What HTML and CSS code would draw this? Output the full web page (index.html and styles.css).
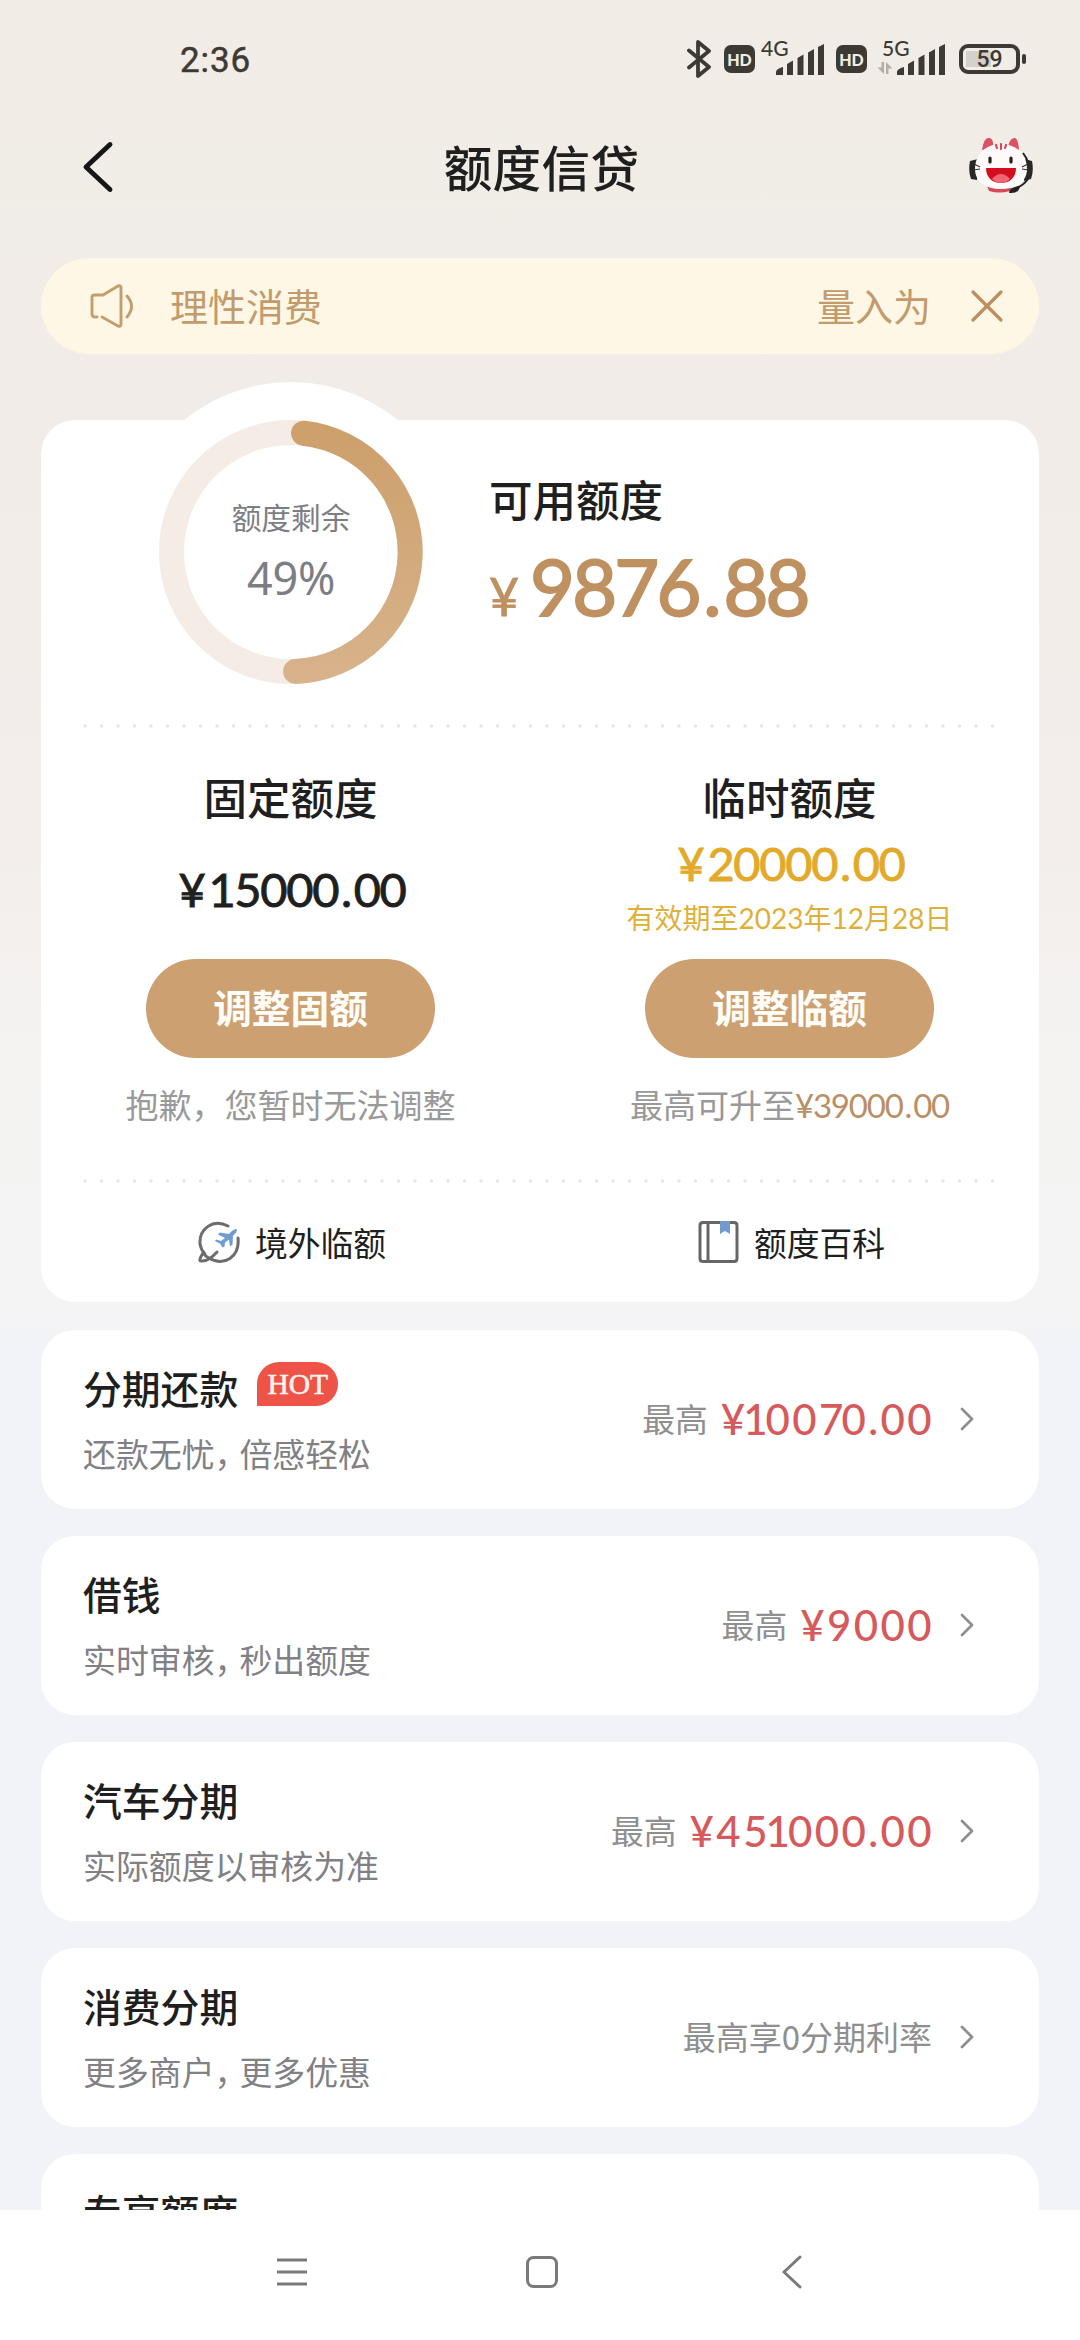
FILE: index.html
```html
<!DOCTYPE html>
<html lang="zh-CN">
<head>
<meta charset="utf-8">
<title>额度信贷</title>
<link rel="stylesheet" href="styles.css">
</head>
<body>
<div class="screen">
  <div class="status-bar">
    <span class="clock">2:36</span>
    <div class="status-icons">
      <svg class="bt" width="24" height="38" viewBox="0 0 24 38"><path d="M2 10.500 22 27 11 36V2L22 11 2 27.500" fill="none" stroke="#3d3935" stroke-width="3.800" stroke-linejoin="round" stroke-linecap="round"/></svg>
      <span class="hd hd-first">HD</span>
      <div class="signal">
        <span class="net">4G</span>
        <svg class="bars" width="48" height="31" viewBox="0 0 48 31"><path d="M0 31v-3q0-3 7-5v8zM11 31V20l6-3.500V31zM21.500 31V14l6-3.500V31zM32 31V8.500L38 5v26zM42 31V3l6-3v31z" fill="#3d3935"/></svg>
      </div>
      <span class="hd hd-second">HD</span>
      <div class="signal signal-data">
        <span class="net">5G</span>
        <svg class="bars" width="68" height="31" viewBox="-20 0 68 31"><path d="M-13 18v12l-6.500-6.500h4V18zM-11 30V18l6.500 6.500h-4V30z" fill="#b3aea8"/><path d="M0 31v-3q0-3 7-5v8zM11 31V20l6-3.500V31zM21.500 31V14l6-3.500V31zM32 31V8.500L38 5v26zM42 31V3l6-3v31z" fill="#3d3935"/></svg>
      </div>
      <div class="battery"><span class="battery-body">59</span><span class="battery-tip"></span></div>
    </div>
  </div>

  <header class="header">
    <svg class="back" width="32" height="52" viewBox="0 0 32 52"><path d="M28 3.500 4 26l24 22.500" fill="none" stroke="#161616" stroke-width="4.900" stroke-linecap="round" stroke-linejoin="round"/></svg>
    <h1 class="title">额度信贷</h1>
    <svg class="mascot" width="64" height="58" viewBox="0 0 64 58">
      <path d="M18 49q14 5 25 0l-2 5q-11 3-21 0z" fill="#d4485a"/>
      <path d="M13 13Q15 0 20 1q5 0 4 10zM39 11q1-9 6-10 4-1 5 12z" fill="#df5063"/>
      <path d="M9 22 1 24q-2 10 1 18l6 1zM55 22l8 2q2 10-1 18l-7 2z" fill="#292727"/>
      <path d="M32 7c16 0 26 11 26 25 0 13-11 20-26 20S6 45 6 32C6 18 16 7 32 7z" fill="#fffafa"/>
      <path d="M27 8l1 3M32 7v5M37 8l-1 3" stroke="#d4485a" stroke-width="2.200" stroke-linecap="round"/>
      <path d="M21 21v4M42 21v4" stroke="#222" stroke-width="3.200" stroke-linecap="round"/>
      <path d="M17 31h30c0 9-6 15-15 15s-15-6-15-15z" fill="#d50e1e"/>
      <path d="M23 42q9-10 18 0-4 4-9 4t-9-4z" fill="#f06675"/>
      <path d="M5 27l6 3M4 33l7-1M59 27l-6 3M60 33l-7-1" stroke="#333" stroke-width="1.200"/>
      <path d="M54 16q4 5 5 10M59 42q-5 7-12 9" fill="none" stroke="#222" stroke-width="2"/>
      <path d="M40 56q0-6 11-7-1 8-11 7z" fill="#222"/>
    </svg>
  </header>

  <div class="notice">
    <svg class="speaker" width="46" height="46" viewBox="0 0 46 46"><g fill="none" stroke="#c49d6c" stroke-width="2.900" stroke-linecap="round" stroke-linejoin="round"><path d="M9 34H7q-3 0-3-3V14q0-2 3-2h8L30 3q3-1 3 2v36q0 3-3 2L14 34"/><path d="M39 13q9 10 0 21"/></g></svg>
    <span class="notice-text">理性消费</span>
    <span class="notice-tail">量入为</span>
    <svg width="34" height="34" viewBox="0 0 34 34"><path d="m3 3 28 28M31 3 3 31" stroke="#bd8d5e" stroke-width="3.200" stroke-linecap="round"/></svg>
  </div>

  <section class="card">
    <div class="overview">
      <div class="ring">
        <svg width="340" height="340" viewBox="0 0 340 340">
          <defs><linearGradient id="arc" x1="0" y1="0" x2="0" y2="1"><stop offset="0" stop-color="#cda06c"/><stop offset="1" stop-color="#d7b28a"/></linearGradient></defs>
          <circle cx="170" cy="170" r="170" fill="#fff"/>
          <circle cx="170" cy="170" r="119.500" fill="none" stroke="#f4ece5" stroke-width="25"/>
          <path d="M182.500 51.200A119.500 119.500 0 0 1 174.600 289.400" fill="none" stroke="url(#arc)" stroke-width="25" stroke-linecap="round"/>
        </svg>
        <div class="ring-label"><span class="ring-name">额度剩余</span><span class="ring-value">49%</span></div>
      </div>
      <div class="available">
        <h2 class="subtitle">可用额度</h2>
        <div class="available-sum"><span class="yen">¥</span><span class="digits">9876<span class="dot">.</span>88</span></div>
      </div>
    </div>
    <svg class="dots" width="914" height="4" viewBox="0 0 914 4"><path d="M2 2h910" stroke="#e5e5e5" stroke-width="3.400" stroke-linecap="round" stroke-dasharray="0 16.500"/></svg>
    <div class="limits">
      <div class="limit">
        <h2 class="subtitle">固定额度</h2>
        <div class="limit-mid limit-mid-single"><span class="sum"><span class="sum-yen">¥</span>15000<span class="dot">.</span>00</span></div>
        <button class="btn">调整固额</button>
        <p class="hint">抱歉，您暂时无法调整</p>
      </div>
      <div class="limit">
        <h2 class="subtitle">临时额度</h2>
        <div class="limit-mid"><span class="sum sum-gold"><span class="sum-yen">¥</span>20000<span class="dot">.</span>00</span><span class="expiry">有效期至<span class="num">2023</span>年<span class="num">12</span>月<span class="num">28</span>日</span></div>
        <button class="btn">调整临额</button>
        <p class="hint">最高可升至<span class="hint-sum">¥39000<span class="dot">.</span>00</span></p>
      </div>
    </div>
    <svg class="dots" width="914" height="4" viewBox="0 0 914 4"><path d="M2 2h910" stroke="#e5e5e5" stroke-width="3.400" stroke-linecap="round" stroke-dasharray="0 16.500"/></svg>
    <div class="links">
      <div class="link">
        <svg width="44" height="44" viewBox="0 0 44 44"><g fill="none" stroke="#6d6d6d" stroke-width="3" stroke-linecap="round" stroke-linejoin="round"><path d="M31 6C16-2 2 9 3 24q1 6 5 10"/><path d="M41 18C43 37 27 47 12 38q-4-2-6-5Q1 41 4 41q7 1 16-9"/></g><path d="M40 9q-4 0-8 5l-9-1.500-2 2 7 3.500-4 3-5-1.500-1 1.500 5 2.500 2.500 4 2-1 .5-4 4-3 1 7 2.500-2 .5-9q4-3 4-6.500z" fill="#6f9bd0"/></svg>
        <span>境外临额</span>
      </div>
      <div class="link link-book">
        <svg width="44" height="44" viewBox="0 0 44 44"><path d="M5 2.500h31q3 0 3 3v33q0 3-3 3H5q-3 0-3-3v-33q0-3 3-3zM10 3v38" fill="none" stroke="#666" stroke-width="3"/><path d="M22 1h10v13l-5-3-5 3z" fill="#6f9bd0"/></svg>
        <span>额度百科</span>
      </div>
    </div>
  </section>

  <section class="item">
    <div class="item-main"><div class="item-head"><h3 class="item-title">分期还款</h3><span class="hot">HOT</span></div><p class="item-sub">还款无忧<span class="comma">，</span>倍感轻松</p></div>
    <span class="item-label">最高</span><span class="item-sum"><span class="tight">¥1</span>00<span class="tight">7</span>0.00</span>
    <svg class="chevron" width="18" height="26" viewBox="0 0 18 26"><path d="m4 3 10 10L4 23" fill="none" stroke="#8f8f8f" stroke-width="2.800" stroke-linecap="round" stroke-linejoin="round"/></svg>
  </section>
  <section class="item">
    <div class="item-main"><div class="item-head"><h3 class="item-title">借钱</h3></div><p class="item-sub">实时审核<span class="comma">，</span>秒出额度</p></div>
    <span class="item-label">最高</span><span class="item-sum">¥9000</span>
    <svg class="chevron" width="18" height="26" viewBox="0 0 18 26"><path d="m4 3 10 10L4 23" fill="none" stroke="#8f8f8f" stroke-width="2.800" stroke-linecap="round" stroke-linejoin="round"/></svg>
  </section>
  <section class="item">
    <div class="item-main"><div class="item-head"><h3 class="item-title">汽车分期</h3></div><p class="item-sub">实际额度以审核为准</p></div>
    <span class="item-label">最高</span><span class="item-sum">¥4<span class="tight">51</span>000.00</span>
    <svg class="chevron" width="18" height="26" viewBox="0 0 18 26"><path d="m4 3 10 10L4 23" fill="none" stroke="#8f8f8f" stroke-width="2.800" stroke-linecap="round" stroke-linejoin="round"/></svg>
  </section>
  <section class="item">
    <div class="item-main"><div class="item-head"><h3 class="item-title">消费分期</h3></div><p class="item-sub">更多商户<span class="comma">，</span>更多优惠</p></div>
    <span class="item-note">最高享0分期利率</span>
    <svg class="chevron" width="18" height="26" viewBox="0 0 18 26"><path d="m4 3 10 10L4 23" fill="none" stroke="#8f8f8f" stroke-width="2.800" stroke-linecap="round" stroke-linejoin="round"/></svg>
  </section>
  <section class="item item-cut">
    <div class="item-main"><div class="item-head"><h3 class="item-title">专享额度</h3></div></div>
  </section>

  <nav class="nav">
    <svg width="34" height="34" viewBox="0 0 34 34"><path d="M2 5h30M2 17h30M2 29h30" stroke="#7a7a7a" stroke-width="3"/></svg>
    <svg width="34" height="34" viewBox="0 0 34 34"><rect x="2.500" y="2.500" width="29" height="29" rx="6" fill="none" stroke="#7a7a7a" stroke-width="3"/></svg>
    <svg width="34" height="34" viewBox="0 0 34 34"><path d="M26 2 10 17l16 15" fill="none" stroke="#7a7a7a" stroke-width="3" stroke-linecap="round" stroke-linejoin="round"/></svg>
  </nav>
</div>
</body>
</html>
```
FILE: styles.css
```css
* { box-sizing: border-box; margin: 0; padding: 0; }
html, body { width: 1080px; height: 2340px; overflow: hidden; }
body { font-family: "Noto Sans CJK SC", sans-serif; color: #1f1f1f; white-space: nowrap; }
svg { display: block; flex: none; }
h1, h2, h3 { font-weight: 500; }

.screen {
  width: 1080px; height: 2340px; overflow: hidden;
  display: flex; flex-direction: column;
  background: linear-gradient(#f1ede6 0, #f1ece7 400px, #f3eeeb 850px, #f4f3f2 1050px, #f4f4f4 1310px, #f2f3f8 1345px);
}
.screen > * { flex: none; }

.status-bar { height: 110px; padding: 0 54px 0 180px; display: flex; justify-content: space-between; }
.clock { font: 400 35px/42px Roboto, sans-serif; -webkit-text-stroke: .5px #3d3935; letter-spacing: .9px; color: #3d3935; margin-top: 40px; }
.status-icons { display: flex; align-items: flex-start; height: 80px; color: #3d3935; }
.bt { margin-top: 40px; }
.hd { width: 31px; height: 28px; margin-top: 45px; border-radius: 7px; background: #3d3935; color: #f1ede6; font: 900 16px/29px Lato, sans-serif; text-align: center; }
.hd-first { margin-left: 13px; }
.hd-second { margin-left: 12px; }
.signal { display: flex; margin-left: 6px; align-items: flex-start; }
.net { width: 27px; margin-top: 37px; font: 500 21px/22px Lato, sans-serif; }
.bars { margin: 44px 0 0 -12px; }
.signal-data { margin-left: 15px; }
.signal-data .bars { margin-left: -32px; }
.battery { display: flex; align-items: center; margin: 44px 0 0 14px; gap: 2px; height: 30px; }
.battery-body { width: 61px; height: 30px; border: 4px solid #3d3935; border-radius: 9px; font: 500 23px/23px Roboto, sans-serif; text-align: center; background: linear-gradient(#d5d0ca, #d5d0ca) 3px 3px / 25px 16px no-repeat; }
.battery-tip { width: 4px; height: 10px; border-radius: 2px; background: #3d3935; }

.header { height: 148px; padding: 0 47px 0 82px; display: flex; align-items: flex-start; justify-content: space-between; }
.back { margin-top: 31px; }
.title { font-size: 48.500px; line-height: 60px; margin: 26px 0 0 0; letter-spacing: .4px; }
.mascot { margin-top: 27px; }

.notice { height: 96px; margin: 0 41px; padding: 0 35px 0 47px; border-radius: 48px; background: #fef7e6; display: flex; align-items: center; color: #c19b6c; font-size: 38px; line-height: 56px; }
.notice-text { margin-left: 36px; margin-top: -3px; flex: 1; }
.notice-tail { margin: -3px 39px 0 0; }

.card { height: 882px; margin: 66px 41px 0; border-radius: 34px; background: #fff; display: flex; flex-direction: column; }
.overview { height: 304px; display: flex; padding-left: 80px; flex: none; }
.ring { position: relative; width: 340px; height: 340px; margin-top: -38px; }
.ring-label { position: absolute; inset: 0; display: flex; flex-direction: column; align-items: center; color: #7d7d84; }
.ring-name { margin-top: 114px; font-size: 29.700px; line-height: 42px; }
.ring-value { font: 400 45px/54px "Noto Sans", sans-serif; margin-top: 13px; letter-spacing: -.3px; }
.available { margin-left: 28px; }
.subtitle { font-size: 43.500px; line-height: 52px; }
.available .subtitle { margin-top: 53px; }
.available-sum { display: flex; align-items: baseline; color: #bf9060; margin-top: 14px; font-family: Lato, sans-serif; line-height: 96px; }
.yen { font-size: 52px; -webkit-text-stroke: .8px #bf9060; width: 41px; }
.digits { font-size: 77.500px; font-weight: 400; -webkit-text-stroke: 1.900px #bf9060; letter-spacing: -2.800px; }
.dot { padding: 0 .06em; }
.dots { margin: 0 0 0 42px; }

.limits { height: 451px; display: grid; grid-template-columns: 1fr 1fr; }
.limit { display: flex; flex-direction: column; align-items: center; padding-top: 43px; }
.limit-mid { height: 136px; display: flex; flex-direction: column; align-items: center; padding-top: 16px; }
.limit-mid-single { padding-top: 42px; }
.sum { font: 400 47px/48px Lato, sans-serif; -webkit-text-stroke: .9px currentColor; letter-spacing: -1.300px; margin-left: 3px; }
.sum-yen { margin-right: 4px; }
.sum-gold { color: #e3aa2a; }
.expiry { font-size: 28px; line-height: 36px; margin-top: 12px; color: #deb03a; }
.num { font-family: Lato, sans-serif; }
.btn { width: 289px; height: 99px; border: 0; border-radius: 50px; background: #cca070; color: #fffdf8; font: 700 38.700px/92px "Noto Sans CJK SC", sans-serif; padding-bottom: 5px; }
.hint { margin-top: 24px; font-size: 33px; line-height: 44px; font-weight: 400; color: #999; }
.hint-sum { font-family: Lato, sans-serif; color: #b98f66; letter-spacing: -1.200px; }

.links { display: grid; grid-template-columns: 1fr 1fr; padding-top: 37px; }
.link { display: flex; justify-content: center; align-items: center; gap: 14px; font-size: 32.800px; line-height: 44px; padding-left: 2px; }
.link-book { gap: 12px; padding-left: 4px; }

.item { height: 179px; margin: 27px 41px 0; padding: 0 63px 0 42px; border-radius: 34px; background: #fff; display: flex; align-items: center; }
.card + .item { margin-top: 28px; }
.item-main { flex: 1; align-self: flex-start; padding-top: 32px; }
.item-head { display: flex; height: 50px; }
.item-title { font-size: 38.800px; line-height: 50px; }
.hot { width: 81px; height: 44px; margin: 0 0 0 19px; border-radius: 22px 22px 22px 0; background: #ee5347; color: #fff3ee; font: 400 29.500px/44px "Liberation Serif", serif; -webkit-text-stroke: .6px #fff3ee; text-align: center; }
.item-sub { font-size: 32.900px; line-height: 44px; margin-top: 19px; color: #808085; }
.comma { letter-spacing: -8px; }
.item-label { font-size: 32.800px; line-height: 44px; color: #8f8f8f; margin: -3px 13px 0 0; }
.item-sum { font: 500 42px/52px Lato, sans-serif; letter-spacing: 2.400px; margin: -2px -2px 0 0; color: #d65a5c; }
.tight { letter-spacing: -2px; }
.item-note { font-size: 33px; line-height: 44px; margin-top: -3px; color: #8f8f8f; }
.chevron { margin: -2px 0 0 26px; }
.item-cut { height: 56px; border-radius: 34px 34px 0 0; overflow: hidden; }

.nav { height: 130px; padding: 45px 272px 0 275px; background: #fff; display: flex; justify-content: space-between; }
```
